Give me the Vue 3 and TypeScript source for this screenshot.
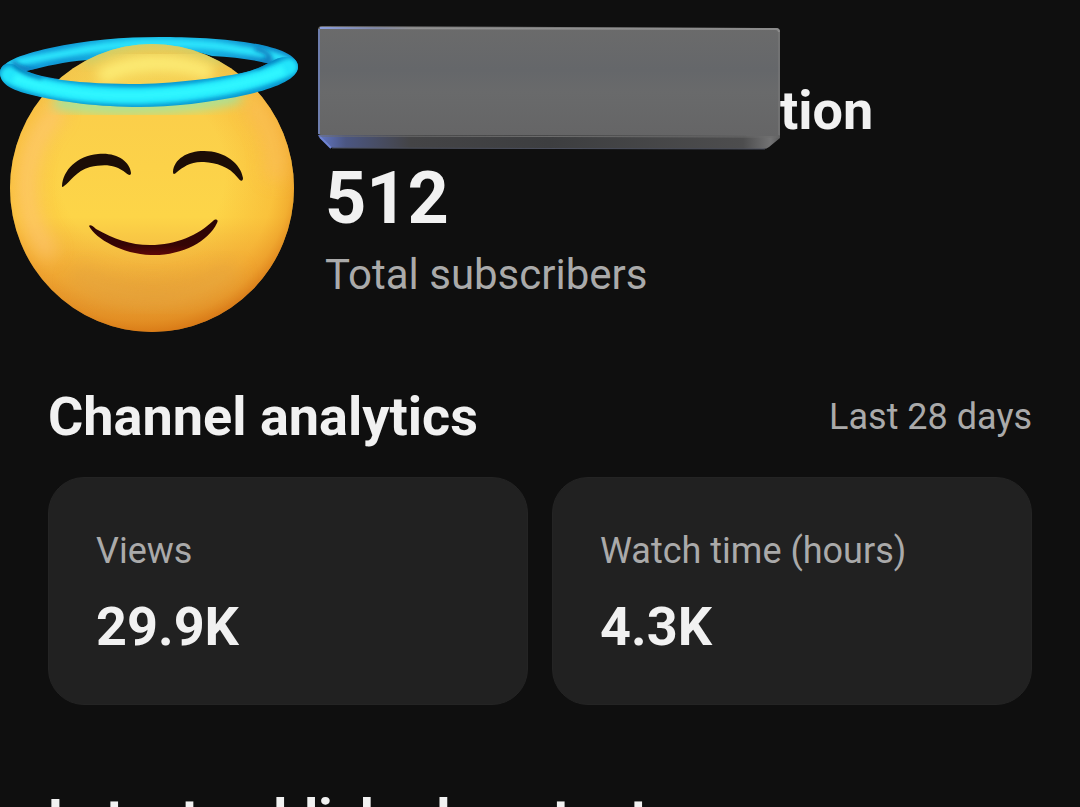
<script setup lang="ts">
interface Metric {
  label: string
  value: string
}

const metrics: Metric[] = [
  { label: 'Views', value: '29.9K' },
  { label: 'Watch time (hours)', value: '4.3K' },
]
</script>

<template>
  <main class="page">
    <header class="channel">
      <svg class="avatar" viewBox="0 0 300 340" role="img" aria-label="Channel avatar">
        <defs>
          <linearGradient id="skin" x1="0" y1="44" x2="0" y2="332" gradientUnits="userSpaceOnUse">
            <stop offset="0" stop-color="#f0dc66" />
            <stop offset="0.25" stop-color="#fbcf4a" />
            <stop offset="0.6" stop-color="#fdd548" />
            <stop offset="0.76" stop-color="#f3b840" />
            <stop offset="0.9" stop-color="#e29e38" />
            <stop offset="1" stop-color="#d98a26" />
          </linearGradient>
          <radialGradient id="rim" cx="142" cy="172" r="166" gradientUnits="userSpaceOnUse">
            <stop offset="0.5" stop-color="#f2921c" stop-opacity="0" />
            <stop offset="0.8" stop-color="#f2961f" stop-opacity="0.3" />
            <stop offset="0.9" stop-color="#e88a1a" stop-opacity="0.5" />
            <stop offset="1" stop-color="#d26a0c" stop-opacity="0.8" />
          </radialGradient>
          <linearGradient id="ringBack" x1="0" y1="0" x2="300" y2="0" gradientUnits="userSpaceOnUse">
            <stop offset="0" stop-color="#14a5df" />
            <stop offset="0.2" stop-color="#1098d6" />
            <stop offset="0.45" stop-color="#18bfe8" />
            <stop offset="0.7" stop-color="#16b0e2" />
            <stop offset="0.9" stop-color="#0f87c8" />
            <stop offset="1" stop-color="#1593d0" />
          </linearGradient>
          <linearGradient id="mouth" x1="0" y1="220" x2="0" y2="256" gradientUnits="userSpaceOnUse">
            <stop offset="0" stop-color="#2a0505" />
            <stop offset="0.7" stop-color="#360405" />
            <stop offset="1" stop-color="#620707" />
          </linearGradient>
          <clipPath id="faceClip"><ellipse cx="152" cy="188" rx="142" ry="144" /></clipPath>
          <clipPath id="frontClip">
            <path d="M0 73C0 65 7 62 15 65C22 72 42 78 62 80C85 83 110 84 140 84C180 83 225 77 246 72C258 69 264 65 271 62C280 55 298 54 298 67C298 79 275 88 250 94C210 103 170 107 140 107C100 107 60 102 32 95C10 90 0 83 0 73Z" />
          </clipPath>
          <clipPath id="backClip">
            <path clip-rule="evenodd" d="M0 73C0 63 18 55 50 48C85 40 125 37 160 37C205 37 298 41 298 67C298 84 220 107 140 107C60 107 0 90 0 73ZM26 71C48 66 62 62 88 60L130 50H190L212 56C235 57 255 60 271 64C257 70 240 74 220 78C190 83 165 84 140 84C100 84 50 81 26 71Z" />
          </clipPath>
          <filter id="soft2" x="-20%" y="-40%" width="140%" height="180%"><feGaussianBlur stdDeviation="2" /></filter>
          <filter id="soft6" x="-60%" y="-60%" width="220%" height="220%"><feGaussianBlur stdDeviation="6" /></filter>
          <filter id="soft10" x="-80%" y="-60%" width="260%" height="220%"><feGaussianBlur stdDeviation="9" /></filter>
        </defs>

        <g clip-path="url(#backClip)">
          <rect width="300" height="115" fill="url(#ringBack)" />
          <path d="M8 65C30 59 55 55 90 49C130 42 200 41 240 50C262 53 280 55 290 64" fill="none" stroke="#2be2fb" stroke-width="8" filter="url(#soft2)" />
          <path d="M12 62C17 66 24 71 38 71M255 48C270 53 275 60 262 62" fill="none" stroke="#0d7fc0" stroke-width="5" filter="url(#soft2)" />
        </g>

        <g clip-path="url(#faceClip)">
          <rect width="300" height="340" fill="url(#skin)" />
          <rect width="300" height="340" fill="url(#rim)" />
          <path d="M60 108C18 150 16 215 52 255" fill="none" stroke="#ffc880" stroke-width="16" opacity="0.7" filter="url(#soft10)" />
          <path d="M250 100C272 125 280 150 275 180" fill="none" stroke="#fabd5c" stroke-width="20" opacity="0.7" filter="url(#soft10)" />
          <path d="M84 60C125 36 180 34 224 60" fill="none" stroke="#b4d67c" stroke-width="12" opacity="0.7" filter="url(#soft6)" />
          <path d="M100 78C125 60 180 58 212 74" fill="none" stroke="#fff680" stroke-width="16" opacity="0.75" filter="url(#soft6)" />
          <path d="M55 102C100 110 180 111 240 96" fill="none" stroke="#8fe9b0" stroke-width="10" filter="url(#soft6)" />
          <path d="M75 272C120 304 190 306 235 268" fill="none" stroke="#e4a540" stroke-width="24" opacity="0.5" filter="url(#soft10)" />
        </g>

        <g clip-path="url(#frontClip)">
          <rect width="300" height="115" fill="#0a98d0" />
          <path d="M9 75C38 90 90 96 140 96C195 95 252 84 289 67" fill="none" stroke="#23e5fb" stroke-width="17" stroke-linecap="round" filter="url(#soft2)" />
          <path d="M14 78C60 94 110 97 150 95C200 93 250 84 284 70" fill="none" stroke="#2ff6ff" stroke-width="9" filter="url(#soft2)" />
          <path d="M14 64C20 71 28 75 42 78M256 68C266 65 270 60 278 57" fill="none" stroke="#0874b4" stroke-width="3" filter="url(#soft2)" />
        </g>

        <path d="M62 186C63 170 77 156 98 154C116 152 130 161 131 173C131 176 128 175 126 173C115 164 104 164 90 167C76 171 70 182 64 186Q62 188 62 186Z" fill="#1c0d06" />
        <path d="M173 172C174 159 187 151 204 151C225 151 241 164 243 178C243 182 240 181 238 178C229 166 216 163 204 162C191 161 183 167 177 172Q173 176 173 172Z" fill="#1c0d06" />
        <path d="M89 226C90 224 93 226 96 229C114 239 130 245 150 245C177 245 198 235 213 221C216 218 219 220 217 223C208 242 181 256 151 255C122 254 96 239 89 226Z" fill="url(#mouth)" />
      </svg>

      <div class="summary">
        <h1 class="name">
          <svg class="slab" viewBox="0 0 462 124" aria-hidden="true">
            <defs>
              <linearGradient id="slabFace" x1="0" y1="0" x2="0" y2="1">
                <stop offset="0" stop-color="#6b6b6b" />
                <stop offset="0.4" stop-color="#65676a" />
                <stop offset="0.6" stop-color="#696a6b" />
                <stop offset="1" stop-color="#656566" />
              </linearGradient>
              <linearGradient id="slabBase" x1="0" y1="0" x2="1" y2="0">
                <stop offset="0" stop-color="#6377c5" />
                <stop offset="0.06" stop-color="#4b5682" />
                <stop offset="0.2" stop-color="#444446" />
                <stop offset="0.5" stop-color="#3d3e40" />
                <stop offset="0.92" stop-color="#4d4d4e" />
                <stop offset="0.98" stop-color="#737374" />
                <stop offset="1" stop-color="#5a5a5b" />
              </linearGradient>
              <linearGradient id="slabEdge" x1="0" y1="0" x2="1" y2="0">
                <stop offset="0" stop-color="#8b9ede" />
                <stop offset="0.12" stop-color="#8189a8" />
                <stop offset="0.2" stop-color="#929292" />
                <stop offset="1" stop-color="#8b8b8b" />
              </linearGradient>
            </defs>
            <path d="M0 109L462 110V112L451 121Q449 123 445 123L16 122Q13 122 11 120L1 111Z" fill="url(#slabBase)" />
            <path d="M4 0L458 2Q462 2 462 6V110L3 109Q0 109 0 106V4Q0 0 4 0Z" fill="url(#slabFace)" />
            <path d="M2 2L458 3Q461 3 461 6" fill="none" stroke="url(#slabEdge)" stroke-width="2" />
            <path d="M1 3V108" stroke="#6e7dac" stroke-width="2" />
            <path d="M461 6V109" stroke="#7c7c7c" />
            <path d="M2 110L461 111" stroke="#6c6c6c" />
            <path d="M2 111L13 122" stroke="#6f84d4" stroke-width="2" />
            <path d="M14 122L447 123" stroke="#4c505e" />
          </svg>
          <span class="name-text">tion</span>
        </h1>
        <p class="count">512</p>
        <p class="caption">Total subscribers</p>
      </div>
    </header>

    <section class="analytics" aria-labelledby="analytics-title">
      <div class="section-head">
        <h2 id="analytics-title" class="title">Channel analytics</h2>
        <span class="label">Last 28 days</span>
      </div>
      <dl class="cards">
        <div v-for="metric in metrics" :key="metric.label" class="card">
          <dt class="label">{{ metric.label }}</dt>
          <dd class="value">{{ metric.value }}</dd>
        </div>
      </dl>
    </section>

    <section class="latest">
      <h2 class="title">Latest published content</h2>
    </section>
  </main>
</template>

<style>
body {
  margin: 0;
  background: #0f0f0f;
}
</style>

<style scoped>
.page {
  box-sizing: border-box;
  height: 100vh;
  overflow: hidden;
  background: #0f0f0f;
  color: #f1f1f1;
  font-family: Roboto, "Liberation Sans", sans-serif;
}

h1,
h2,
p,
dl,
dd {
  margin: 0;
}

.channel {
  display: flex;
  align-items: flex-start;
  gap: 18px;
}

.avatar {
  flex: none;
  display: block;
  width: 300px;
  height: 340px;
}

.summary {
  padding-top: 26px;
}

.name {
  display: flex;
  align-items: flex-end;
  font-size: 54px;
  line-height: 64px;
  font-weight: 700;
}

.slab {
  flex: none;
  width: 462px;
  height: 124px;
}

.name-text {
  padding-bottom: 7px;
}

.count {
  padding: 7px 0 0 7px;
  font-size: 72px;
  line-height: 84px;
  font-weight: 700;
}

.caption {
  padding: 9px 0 0 7px;
  color: #aaa;
  font-size: 42px;
  line-height: 50px;
}

.analytics {
  padding: 45px 48px 0;
}

.section-head {
  display: flex;
  align-items: center;
  justify-content: space-between;
}

.title,
.value {
  font-size: 54px;
  line-height: 64px;
  font-weight: 700;
}

.label {
  color: #aaa;
  font-size: 36px;
  line-height: 42px;
}

.cards {
  display: grid;
  grid-template-columns: 1fr 1fr;
  gap: 24px;
  padding-top: 28px;
}

.card {
  display: flex;
  flex-direction: column;
  gap: 23px;
  padding: 52px 47px 45px;
  border: 1px solid #242424;
  border-radius: 36px;
  background: #212121;
}

.latest {
  padding: 82px 48px 0;
}
</style>
